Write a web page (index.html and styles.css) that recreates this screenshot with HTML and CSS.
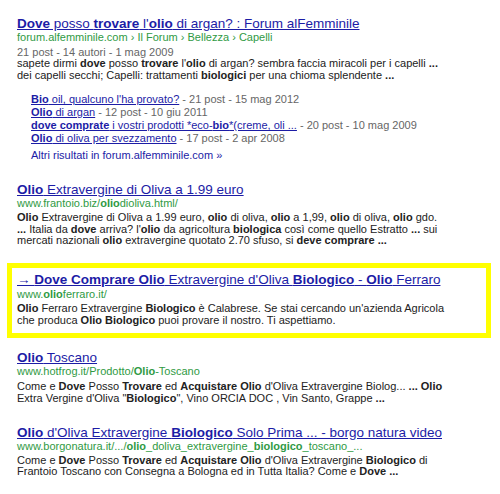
FILE: index.html
```html
<!DOCTYPE html>
<html>
<head>
<meta charset="utf-8">
<link rel="stylesheet" href="styles.css">
</head>
<body>
<div class="results">
  <div class="result r1">
    <a class="title" href="#"><b>Dove</b> posso <b>trovare</b> l'<b>olio</b> di argan? : Forum alFemminile</a>
    <div class="url">forum.alfemminile.com › Il Forum › Bellezza › Capelli</div>
    <div class="meta">21 post - 14 autori - 1 mag 2009</div>
    <div class="snippet">
      <span class="ln">sapete dirmi <b>dove</b> posso <b>trovare</b> l'<b>olio</b> di argan? sembra faccia miracoli per i capelli <b>...</b></span>
      <span class="ln">dei capelli secchi; Capelli: trattamenti <b>biologici</b> per una chioma splendente <b>...</b></span>
    </div>
    <div class="sitelinks">
      <div class="sl"><a href="#"><b>Bio</b> oil, qualcuno l'ha provato?</a> - 21 post - 15 mag 2012</div>
      <div class="sl"><a href="#"><b>Olio</b> di argan</a> - 12 post - 10 giu 2011</div>
      <div class="sl"><a href="#"><b>dove comprate</b> i vostri prodotti *eco-<b>bio</b>*(creme, oli ...</a> - 20 post - 10 mag 2009</div>
      <div class="sl"><a href="#"><b>Olio</b> di oliva per svezzamento</a> - 17 post - 2 apr 2008</div>
      <div class="more">Altri risultati in forum.alfemminile.com »</div>
    </div>
  </div>

  <div class="result r2">
    <a class="title" href="#"><b>Olio</b> Extravergine di Oliva a 1.99 euro</a>
    <div class="url">www.frantoio.biz/<b>olio</b>dioliva.html/</div>
    <div class="snippet">
      <span class="ln"><b>Olio</b> Extravergine di Oliva a 1.99 euro, <b>olio</b> di oliva, <b>olio</b> a 1,99, <b>olio</b> di oliva, <b>olio</b> gdo.</span>
      <span class="ln"><b>...</b> Italia da <b>dove</b> arriva? l'<b>olio</b> da agricoltura <b>biologica</b> così come quello Estratto <b>...</b> sui</span>
      <span class="ln">mercati nazionali <b>olio</b> extravergine quotato 2.70 sfuso, si <b>deve comprare ...</b></span>
    </div>
  </div>

  <div class="result r3 highlight">
    <a class="title" href="#">→ <b>Dove Comprare Olio</b> Extravergine d'Oliva <b>Biologico</b> - <b>Olio</b> Ferraro</a>
    <div class="url">www.<b>olio</b>ferraro.it/</div>
    <div class="snippet">
      <span class="ln"><b>Olio</b> Ferraro Extravergine <b>Biologico</b> è Calabrese. Se stai cercando un'azienda Agricola</span>
      <span class="ln">che produca <b>Olio Biologico</b> puoi provare il nostro. Ti aspettiamo.</span>
    </div>
  </div>

  <div class="result r4">
    <a class="title" href="#"><b>Olio</b> Toscano</a>
    <div class="url">www.hotfrog.it/Prodotto/<b>Olio</b>-Toscano</div>
    <div class="snippet">
      <span class="ln">Come e <b>Dove</b> Posso <b>Trovare</b> ed <b>Acquistare Olio</b> d'Oliva Extravergine Biolog... <b>... Olio</b></span>
      <span class="ln">Extra Vergine d'Oliva "<b>Biologico</b>", Vino ORCIA DOC , Vin Santo, Grappe <b>...</b></span>
    </div>
  </div>

  <div class="result r5">
    <a class="title" href="#"><b>Olio</b> d'Oliva Extravergine <b>Biologico</b> Solo Prima ... - borgo natura video</a>
    <div class="url">www.borgonatura.it/.../<b>olio</b>_doliva_extravergine_<b>biologico</b>_toscano_...</div>
    <div class="snippet">
      <span class="ln">Come e <b>Dove</b> Posso <b>Trovare</b> ed <b>Acquistare Olio</b> d'Oliva Extravergine <b>Biologico</b> di</span>
      <span class="ln">Frantoio Toscano con Consegna a Bologna ed in Tutta Italia? Come e <b>Dove ...</b></span>
    </div>
  </div>
</div>
</body>
</html>
```

FILE: styles.css
```css
html, body {
  margin: 0;
  padding: 0;
  background: #ffffff;
}

body {
  font-family: "Liberation Sans", Arial, sans-serif;
  color: #222222;
}

.results {
  width: 500px;
  height: 494px;
  box-sizing: border-box;
  padding: 17px 0 0 17px;
  display: flex;
  flex-direction: column;
  overflow: hidden;
}

.result {
  display: flex;
  flex-direction: column;
}

.title {
  display: block;
  font-size: 13.5px;
  line-height: 14px;
  height: 14px;
  color: #1c1ca6;
  text-decoration: underline;
  white-space: nowrap;
}

.title b {
  font-weight: bold;
}

.url {
  font-size: 11px;
  line-height: 12px;
  color: #2f9a44;
  white-space: nowrap;
}

.meta {
  margin-top: 3px;
  font-size: 11px;
  line-height: 12px;
  color: #666666;
}

.snippet {
  margin-top: 3px;
  font-size: 11px;
  line-height: 11.5px;
  color: #222222;
}

.snippet .ln {
  display: block;
  white-space: nowrap;
}

.r1 .meta + .snippet {
  margin-top: 0;
}

.sitelinks {
  margin-top: 12px;
  padding-left: 14px;
  font-size: 11px;
  color: #666666;
}

.sl {
  line-height: 13px;
  white-space: nowrap;
}

.sl a {
  color: #1c1ca6;
  text-decoration: underline;
}

.more {
  margin-top: 4px;
  line-height: 13px;
  color: #1c1ca6;
}

.r2 {
  margin-top: 21px;
}

.highlight {
  margin-top: 16px;
  margin-left: -10px;
  width: 484px;
  box-sizing: border-box;
  border: 5px solid #ffff00;
  padding: 5px 0 7px 5px;
}

.highlight .url {
  margin-top: 1px;
}

.highlight .snippet {
  margin-top: 2px;
  line-height: 12px;
}

.r4 {
  margin-top: 13px;
}

.r4 .snippet {
  line-height: 12px;
}

.r5 {
  margin-top: 22px;
}
```
